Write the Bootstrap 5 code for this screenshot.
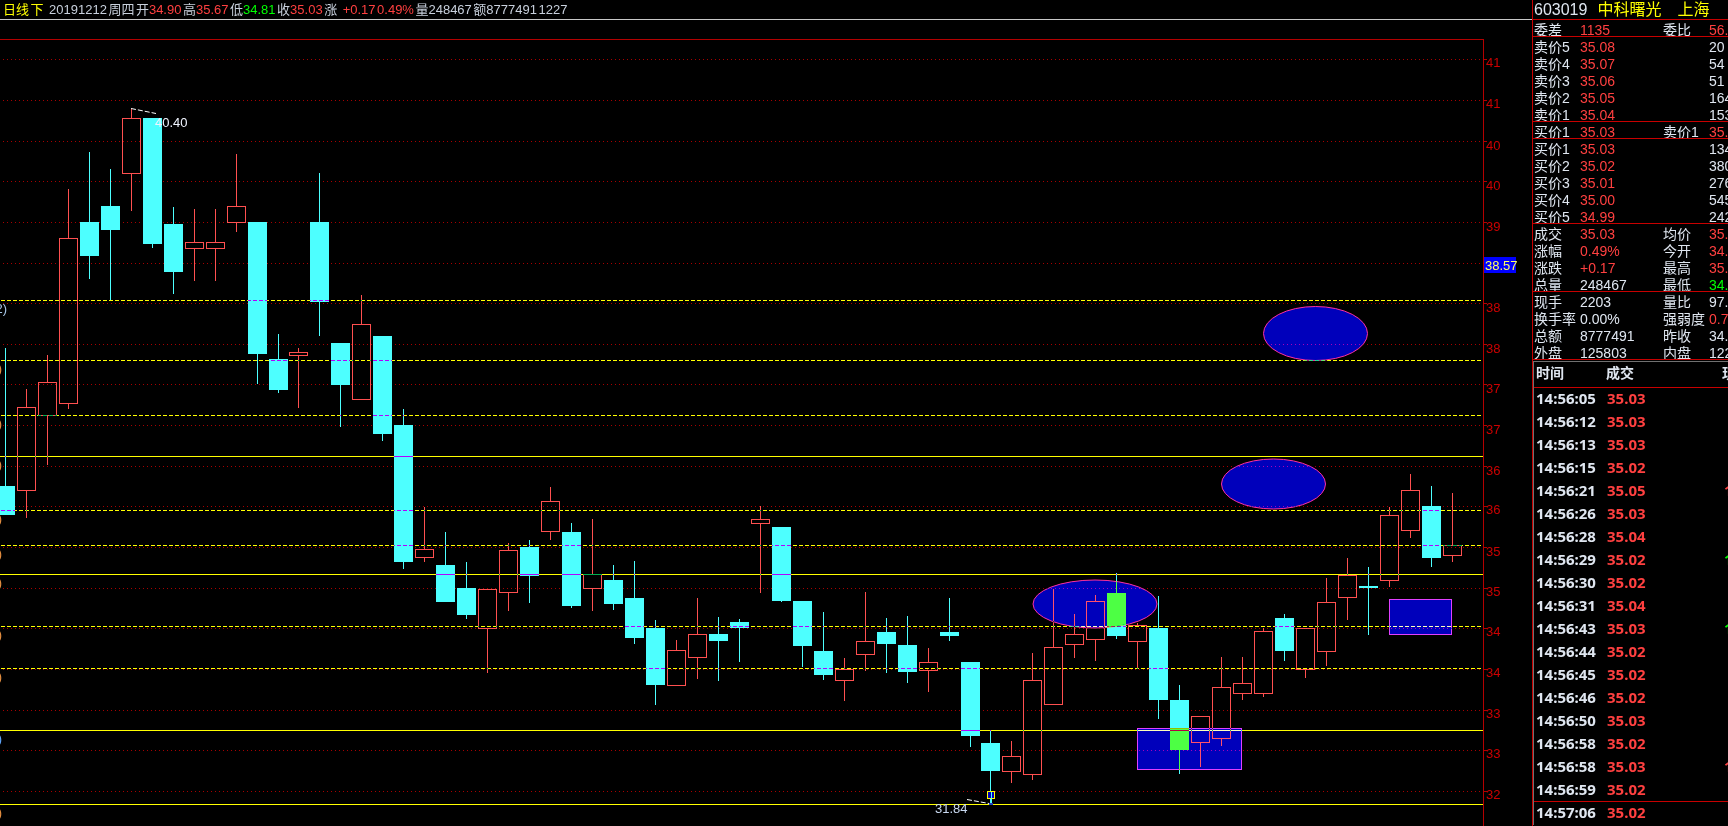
<!DOCTYPE html>
<html lang="zh">
<head>
    <meta charset="UTF-8">
    <title>603019 中科曙光 日线</title>
    <link href="https://cdn.jsdelivr.net/npm/bootstrap@5.3.0/dist/css/bootstrap.min.css" rel="stylesheet">
    <style>
        body { background: #000; font-family: "Liberation Sans", "Noto Sans CJK SC", sans-serif; color: #dfe6f0; }
        .k-left { width: 1532px; }
        .k-title { height: 20px; border-bottom: 1px solid #c8c8c8; font-size: 13px; line-height: 19px; padding-left: 3px; gap: 1.5px; color: #c8d0dc; white-space: nowrap; }
        .k-chart { display: block; width: 1532px; height: 806px; }
        .k-side { width: 196px; border-left: 1px solid #c80000; }
        .k-stock { height: 20px; border-bottom: 1px solid #c80000; font-size: 16px; line-height: 19px; padding-left: 1px; white-space: nowrap; }
        .k-name { margin-left: 10px; }
        .k-row { height: 17px; line-height: 20px; font-size: 14px; padding-left: 1px; white-space: nowrap; overflow: hidden; }
        .k-row.k-end { border-bottom: 1px solid #c80000; }
        .k-c1 { flex: 0 0 46px; }
        .k-c2 { flex: 0 0 83px; }
        .k-c3 { flex: 0 0 46px; }
        .k-ticks { border-left: 1px solid #707070; border-top: 1px solid #707070; margin-top: 1px; }
        .k-thead { height: 26px; line-height: 23px; font-size: 14px; font-weight: 700; padding-left: 2px; border-bottom: 1px solid #c80000; white-space: nowrap; overflow: hidden; }
        .k-tick { height: 23px; line-height: 21px; font-family: "Noto Sans", sans-serif; font-size: 15px; font-weight: 700; padding-left: 2px; white-space: nowrap; overflow: hidden; }
        .k-tick.k-sep { border-bottom: 1px solid #c80000; }
        .k-t1 { flex: 0 0 71px; }
        .k-t2 { flex: 0 0 117px; }
        .k-h1 { flex: 0 0 70px; }
        .k-h2 { flex: 0 0 116px; }
        .k-up { color: #ff4040; }
        .k-dn { color: #00ff00; }
        .k-yl { color: #ffff00; }
    </style>
</head>
<body>
    <div class="d-flex vh-100 overflow-hidden">
        <!-- K线区 -->
        <div class="k-left flex-shrink-0">
            <div class="k-title d-flex">
                <span class="k-yl">日线</span>
                <span class="k-yl">下</span>
                <span class="ms-1">20191212</span>
                <span>周四</span>
                <span>开<span class="k-up">34.90</span></span>
                <span>高<span class="k-up">35.67</span></span>
                <span>低<span class="k-dn">34.81</span></span>
                <span>收<span class="k-up">35.03</span></span>
                <span>涨</span>
                <span class="k-up ms-1">+0.17</span>
                <span class="k-up">0.49%</span>
                <span>量248467</span>
                <span>额8777491</span>
                <span>1227</span>
            </div>
            <svg id="chart" class="k-chart" viewBox="0 20 1532 806" xmlns="http://www.w3.org/2000/svg"></svg>
        </div>

        <!-- 盘口 -->
        <div class="k-side flex-grow-1 overflow-hidden">
            <div class="k-stock d-flex">
                <span>603019</span>
                <span class="k-yl k-name">中科曙光</span>
                <span class="k-yl ms-3">上海</span>
            </div>
            <div id="quote"></div>
            <div class="k-ticks">
                <div class="k-thead d-flex"><span class="k-h1">时间</span><span class="k-h2">成交</span><span>现</span></div>
                <div id="ticks"></div>
            </div>
        </div>
    </div>

    <script>
        // [上影, 实体上, 实体下, 下影, 类型] r=红空心 c=青实心
        const candles = [
            [348,486,515,515,'c'],[389,407,490,518,'r'],[355,382,415,465,'r'],[189,238,403,409,'r'],
            [152,222,256,279,'c'],[169,206,230,300,'c'],[109,118,173,211,'r'],[118,118,244,248,'c'],
            [207,224,272,294,'c'],[209,242,248,281,'r'],[209,242,248,281,'r'],[154,206,222,232,'r'],
            [222,222,354,384,'c'],[334,359,390,393,'c'],[348,352,355,408,'r'],[173,222,302,336,'c'],
            [343,343,385,427,'c'],[295,324,399,399,'r'],[336,336,434,441,'c'],[409,425,562,569,'c'],
            [507,549,557,562,'r'],[532,565,602,602,'c'],[562,588,615,619,'c'],[589,589,628,673,'r'],
            [543,550,592,611,'r'],[540,547,576,603,'c'],[487,501,531,540,'r'],[523,532,606,608,'c'],
            [519,574,588,611,'r'],[565,580,604,610,'c'],[561,598,638,644,'c'],[620,628,685,705,'c'],
            [640,650,685,685,'r'],[598,634,657,679,'r'],[617,634,641,681,'c'],[619,622,628,662,'c'],
            [506,519,523,593,'r'],[527,527,601,602,'c'],[601,601,646,667,'c'],[612,651,675,680,'c'],
            [658,669,680,701,'r'],[592,641,654,671,'r'],[618,632,644,673,'c'],[616,645,672,683,'c'],
            [648,662,670,692,'r'],[598,632,636,641,'c'],[662,662,736,747,'c'],[730,743,771,804,'c'],
            [741,756,771,783,'r'],[653,680,774,780,'r'],[589,647,704,704,'r'],[614,634,644,658,'r'],
            [595,601,639,661,'r'],[573,593,636,639,'c'],[623,625,641,669,'r'],[596,628,700,719,'c'],
            [685,700,750,774,'c'],[716,716,742,767,'r'],[657,687,738,746,'r'],[657,683,693,700,'r'],
            [628,631,693,697,'r'],[614,618,651,661,'c'],[628,628,669,678,'r'],[578,602,651,666,'r'],
            [558,575,597,620,'r'],[567,586,588,635,'c'],[507,515,580,587,'r'],[474,490,530,538,'r'],
            [486,506,558,567,'c'],[493,545,555,562,'r']
        ];
        const grid = [59,100,141,181,222,263,303,344,384,425,466,506,547,588,628,669,710,750,791];
        const dashed = [300,360,415,510,545,626,668];
        const solid = [456,574,730,804];
        const axis = [[62,'41'],[103,'41'],[145,'40'],[185,'40'],[226,'39'],[307,'38'],[348,'38'],[388,'37'],[429,'37'],
            [470,'36'],[509,'36'],[551,'35'],[591,'35'],[631,'34'],[672,'34'],[713,'33'],[753,'33'],[794,'32']];
        const cut = [[369,'#e89040'],[424,'#e89040'],[465,'#e89040'],[519,'#e89040'],[554,'#e89040'],
            [583,'#e89040'],[635,'#e89040'],[677,'#e89040'],[739,'#60a8ff'],[813,'#e89040']];

        let s = '<rect x="0" y="20" width="1532" height="806" fill="#000"/>';
        s += '<g shape-rendering="crispEdges">';
        grid.forEach(y => { s += `<line x1="3" x2="1483" y1="${y+.5}" y2="${y+.5}" stroke="#a80000" stroke-dasharray="1 3"/>`; });
        s += '<line x1="0" x2="1484" y1="39.5" y2="39.5" stroke="#b40000"/>';
        s += '<line x1="1483.5" x2="1483.5" y1="39" y2="826" stroke="#b40000"/>';
        grid.forEach(y => { s += `<line x1="1484" x2="1487" y1="${y+.5}" y2="${y+.5}" stroke="#b40000"/>`; });

        // 蜡烛
        candles.forEach((c, n) => {
            const x = Math.floor(5.4 + 20.97 * n);
            const col = c[4] === 'c' ? '#4dffff' : '#ff5050';
            if (c[0] < c[1]) s += `<line x1="${x+.5}" x2="${x+.5}" y1="${c[0]}" y2="${c[1]}" stroke="${col}"/>`;
            if (c[3] > c[2]) s += `<line x1="${x+.5}" x2="${x+.5}" y1="${c[2]}" y2="${c[3]}" stroke="${col}"/>`;
            if (c[4] === 'c') {
                s += `<rect x="${x-9}" y="${c[1]}" width="19" height="${c[2]-c[1]}" fill="${col}"/>`;
            } else {
                s += `<rect x="${x-8.5}" y="${c[1]+.5}" width="18" height="${c[2]-c[1]}" fill="none" stroke="${col}"/>`;
            }
        });
        s += '</g>';

        // 标记图形,异或效果
        s += '<g style="mix-blend-mode:difference">';
        s += '<ellipse cx="1315.5" cy="333.5" rx="52" ry="27" fill="#0000bb" stroke="#ff30a0"/>';
        s += '<ellipse cx="1273.5" cy="484" rx="52" ry="25" fill="#0000bb" stroke="#ff30a0"/>';
        s += '<ellipse cx="1095" cy="604" rx="62" ry="24" fill="#0000bb" stroke="#ff30a0"/>';
        s += '<g shape-rendering="crispEdges"><rect x="1137.5" y="728.5" width="104" height="41" fill="#0000bb" stroke="#e040ff"/>';
        s += '<rect x="1389.5" y="599.5" width="62" height="35" fill="#0000bb" stroke="#e040ff"/></g></g>';

        // 黄线
        s += '<g style="mix-blend-mode:difference" shape-rendering="crispEdges">';
        dashed.forEach(y => { s += `<line x1="1" x2="1481" y1="${y+.5}" y2="${y+.5}" stroke="#ffff00" stroke-dasharray="4 2"/>`; });
        solid.forEach(y => { s += `<line x1="0" x2="1483" y1="${y+.5}" y2="${y+.5}" stroke="#ffff00"/>`; });
        s += '</g>';

        // 文字
        s += '<g font-family="Liberation Sans, sans-serif" font-size="13">';
        axis.forEach(a => { s += `<text x="1486" y="${a[0]+5}" fill="#cc0000">${a[1]}</text>`; });
        cut.forEach(c => { s += `<text x="2" y="${c[0]+4}" text-anchor="end" fill="${c[1]}">)</text>`; });
        s += '<text x="7" y="313" text-anchor="end" fill="#a8c8e8">2)</text>';
        s += '<text x="155" y="127" fill="#f0f4ff">40.40</text>';
        s += '<text x="935" y="813" fill="#c8d8f0">31.84</text>';
        s += '</g>';
        s += '<rect x="1484" y="257" width="32" height="16" fill="#0000ff"/>';
        s += '<text x="1485" y="270" font-family="Liberation Sans, sans-serif" font-size="13" fill="#ffff60">38.57</text>';

        // 最高最低引线
        s += '<g stroke="#fff" stroke-dasharray="5 2">';
        s += '<line x1="131" y1="108.5" x2="156" y2="113.5"/>';
        s += '<line x1="967" y1="799.5" x2="989" y2="803.5"/></g>';
        s += '<g shape-rendering="crispEdges"><rect x="987.5" y="791.5" width="7" height="7" fill="#0000bb" stroke="#ffff00"/>';
        s += '<line x1="991.5" x2="991.5" y1="792" y2="803" stroke="#4dffff"/>';
        s += '<rect x="989" y="803" width="4" height="2" fill="#2040c0"/></g>';
        document.getElementById('chart').innerHTML = s;

        // 盘口数据:[名称, 值, 值色, 名称2, 值2, 值2色, 是否分隔]
        const quote = [
            ['委差','1135','u','委比','56.','u',1],
            ['卖价5','35.08','u','','20','',0],['卖价4','35.07','u','','54','',0],['卖价3','35.06','u','','51','',0],
            ['卖价2','35.05','u','','164','',0],['卖价1','35.04','u','','153','',1],
            ['买价1','35.03','u','卖价1','35.','u',1],
            ['买价1','35.03','u','','134','',0],['买价2','35.02','u','','380','',0],['买价3','35.01','u','','276','',0],
            ['买价4','35.00','u','','545','',0],['买价5','34.99','u','','242','',1],
            ['成交','35.03','u','均价','35.','u',0],['涨幅','0.49%','u','今开','34.','u',0],
            ['涨跌','+0.17','u','最高','35.','u',0],['总量','248467','','最低','34.','d',1],
            ['现手','2203','','量比','97.','',0],['换手率','0.00%','','强弱度','0.7','u',0],
            ['总额','8777491','','昨收','34.','',0],['外盘','125803','','内盘','122','',1]
        ];
        const tone = { u: 'k-up', d: 'k-dn', '': '' };
        document.getElementById('quote').innerHTML = quote.map(q => `
            <div class="k-row d-flex ${q[6] ? 'k-end' : ''}">
                <span class="k-c1">${q[0]}</span>
                <span class="k-c2 ${tone[q[2]]}">${q[1]}</span>
                <span class="k-c3">${q[3]}</span>
                <span class="${tone[q[5]]}">${q[4]}</span>
            </div>`).join('');

        // 成交明细
        const ticks = [
            ['14:56:05','35.03',''],['14:56:12','35.03',''],['14:56:13','35.03',''],['14:56:15','35.02',''],
            ['14:56:21','35.05','u'],['14:56:26','35.03',''],['14:56:28','35.04',''],['14:56:29','35.02','d'],
            ['14:56:30','35.02',''],['14:56:31','35.04',''],['14:56:43','35.03','d'],['14:56:44','35.02',''],
            ['14:56:45','35.02',''],['14:56:46','35.02',''],['14:56:50','35.03',''],['14:56:58','35.02',''],
            ['14:56:58','35.03','u'],['14:56:59','35.02',''],['14:57:06','35.02','']
        ];
        document.getElementById('ticks').innerHTML = ticks.map((t, i) => `
            <div class="k-tick d-flex ${i === 17 ? 'k-sep' : ''}">
                <span class="k-t1">${t[0]}</span>
                <span class="k-t2 k-up">${t[1]}</span>
                <span class="${tone[t[2]]}">${t[2] ? '1' : ''}</span>
            </div>`).join('');
    </script>
    <script src="https://cdn.jsdelivr.net/npm/bootstrap@5.3.0/dist/js/bootstrap.bundle.min.js"></script>
</body>
</html>
